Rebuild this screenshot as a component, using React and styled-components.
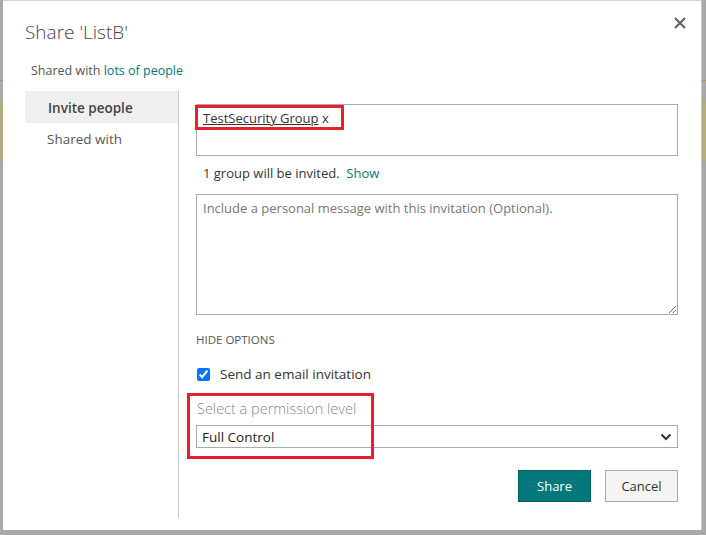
import React from "react";
import styled, { createGlobalStyle } from "styled-components";

const Global = createGlobalStyle`
  html, body { margin: 0; padding: 0; overflow: hidden; }
  body { font-family: "Open Sans", "Noto Sans", sans-serif; color: #333; }
  * { box-sizing: border-box; }
`;

const Page = styled.div`
  width: 706px;
  height: 535px;
  padding: 0 4px 5px 3px;
  background:
    linear-gradient(#d08a3a, #d08a3a) 0 80px / 100% 1px no-repeat,
    linear-gradient(#b4ad80, #b4ad80) 0 101px / 100% 60px no-repeat,
    #a9a9a9;
  display: flex;
`;

const Dialog = styled.div`
  flex: 1;
  background: #fff;
  border-top: 1px solid #d4d4d4;
  border-right: 1px solid #c8c8c8;
  padding: 17px 23px 12px 22px;
  display: flex;
  flex-direction: column;
`;

const Header = styled.div`
  display: flex;
  justify-content: space-between;
  align-items: flex-start;
`;

const Title = styled.h1`
  margin: 0;
  font-size: 19px;
  font-weight: 300;
  line-height: 28px;
  color: #444;
`;

const Close = styled.button`
  border: 0;
  background: none;
  padding: 0;
  margin: -2px -9px 0 0;
  width: 14px;
  height: 14px;
  display: flex;
  cursor: pointer;
`;

const Subtitle = styled.div`
  margin: 17px 0 0 6px;
  font-size: 12.5px;
  line-height: 16px;
  color: #555;
`;

const Teal = styled.span`
  color: #03787c;
`;

const Body = styled.div`
  flex: 1;
  display: flex;
  margin-top: 12px;
`;

const Nav = styled.nav`
  width: 154px;
  border-right: 1px solid #c8c8c8;
  display: flex;
  flex-direction: column;
`;

const NavItem = styled.div`
  height: 32px;
  display: flex;
  align-items: center;
  padding: ${(p) => (p.$active ? "1px 0 0 23px" : "0 0 0 22px")};
  font-size: 13.5px;
  font-weight: ${(p) => (p.$active ? 600 : 400)};
  color: ${(p) => (p.$active ? "#444" : "#555")};
  background: ${(p) => (p.$active ? "#efefef" : "transparent")};
`;

const Main = styled.div`
  flex: 1;
  padding: 13px 0 0 17px;
  display: flex;
  flex-direction: column;
`;

const PeopleBox = styled.div`
  position: relative;
  height: 52px;
  border: 1px solid #ababab;
  padding: 5px 6px 0;
  font-size: 13px;
  line-height: 17px;
  color: #333;
`;

const TokenName = styled.span`
  text-decoration: underline;
  text-decoration-color: #333;
  text-decoration-thickness: 1px;
  text-underline-offset: 1px;
`;

const Highlight = styled.div`
  position: absolute;
  border: 3px solid #e8202a;
  pointer-events: none;
  left: ${(p) => p.$left}px;
  top: ${(p) => p.$top}px;
  width: ${(p) => p.$w}px;
  height: ${(p) => p.$h}px;
`;

const InviteInfo = styled.div`
  margin: 8px 0 0 7px;
  font-size: 13px;
  line-height: 18px;
  color: #333;
`;

const Message = styled.textarea`
  margin-top: 12px;
  height: 121px;
  width: 100%;
  border: 1px solid #ababab;
  padding: 4px 6px;
  resize: vertical;
  font-family: inherit;
  font-size: 13px;
  line-height: 18px;
  color: #333;
  &::placeholder { color: #777; }
`;

const OptionsToggle = styled.div`
  margin-top: 17px;
  font-size: 11.5px;
  line-height: 16px;
  color: #555;
  text-transform: uppercase;
`;

const CheckRow = styled.label`
  margin-top: 17px;
  display: flex;
  align-items: center;
  gap: 10px;
  font-size: 13.5px;
  line-height: 18px;
  color: #333;
  input { margin: 0 0 0 1px; width: 13px; height: 13px; }
`;

const PermissionGroup = styled.div`
  position: relative;
  margin-top: 17px;
  display: flex;
  flex-direction: column;
`;

const PermissionLabel = styled.div`
  padding-left: 1px;
  font-size: 14.5px;
  font-weight: 300;
  line-height: 18px;
  color: #888;
`;

const Select = styled.div`
  margin-top: 7px;
  height: 23px;
  border: 1px solid #ababab;
  display: flex;
  align-items: center;
  justify-content: space-between;
  padding: 0 5px 0 5px;
  font-size: 13.5px;
  color: #222;
`;

const Footer = styled.div`
  margin-top: 22px;
  display: flex;
  justify-content: flex-end;
  gap: 14px;
`;

const Button = styled.button`
  width: 73px;
  height: 32px;
  font-family: inherit;
  font-size: 13px;
  border: 1px solid ${(p) => (p.$primary ? "#00625f" : "#ababab")};
  background: ${(p) => (p.$primary ? "#03787c" : "#f4f4f4")};
  color: ${(p) => (p.$primary ? "#fff" : "#333")};
  cursor: pointer;
`;

export default function App() {
  return (
    <Page>
      <Global />
      <Dialog>
        <Header>
          <Title>Share 'ListB'</Title>
          <Close aria-label="Close">
            <svg width="14" height="14" viewBox="0 0 14 14">
              <path d="M2 2 L12 12 M12 2 L2 12" stroke="#666" strokeWidth="2.2" />
            </svg>
          </Close>
        </Header>
        <Subtitle>
          Shared with <Teal>lots of people</Teal>
        </Subtitle>
        <Body>
          <Nav>
            <NavItem $active>Invite people</NavItem>
            <NavItem>Shared with</NavItem>
          </Nav>
          <Main>
            <PeopleBox>
              <TokenName>TestSecurity Group</TokenName> x
              <Highlight $left={-2} $top={0} $w={149} $h={25} />
            </PeopleBox>
            <InviteInfo>
              1 group will be invited.&nbsp; <Teal>Show</Teal>
            </InviteInfo>
            <Message placeholder="Include a personal message with this invitation (Optional)." />
            <OptionsToggle>Hide options</OptionsToggle>
            <CheckRow>
              <input type="checkbox" defaultChecked />
              Send an email invitation
            </CheckRow>
            <PermissionGroup>
              <PermissionLabel>Select a permission level</PermissionLabel>
              <Select>
                <span>Full Control</span>
                <svg width="12" height="8" viewBox="0 0 12 8">
                  <path d="M1.5 1.5 L6 6 L10.5 1.5" fill="none" stroke="#333" strokeWidth="2" />
                </svg>
              </Select>
              <Highlight $left={-9} $top={-7} $w={187} $h={66} />
            </PermissionGroup>
            <Footer>
              <Button $primary>Share</Button>
              <Button>Cancel</Button>
            </Footer>
          </Main>
        </Body>
      </Dialog>
    </Page>
  );
}
